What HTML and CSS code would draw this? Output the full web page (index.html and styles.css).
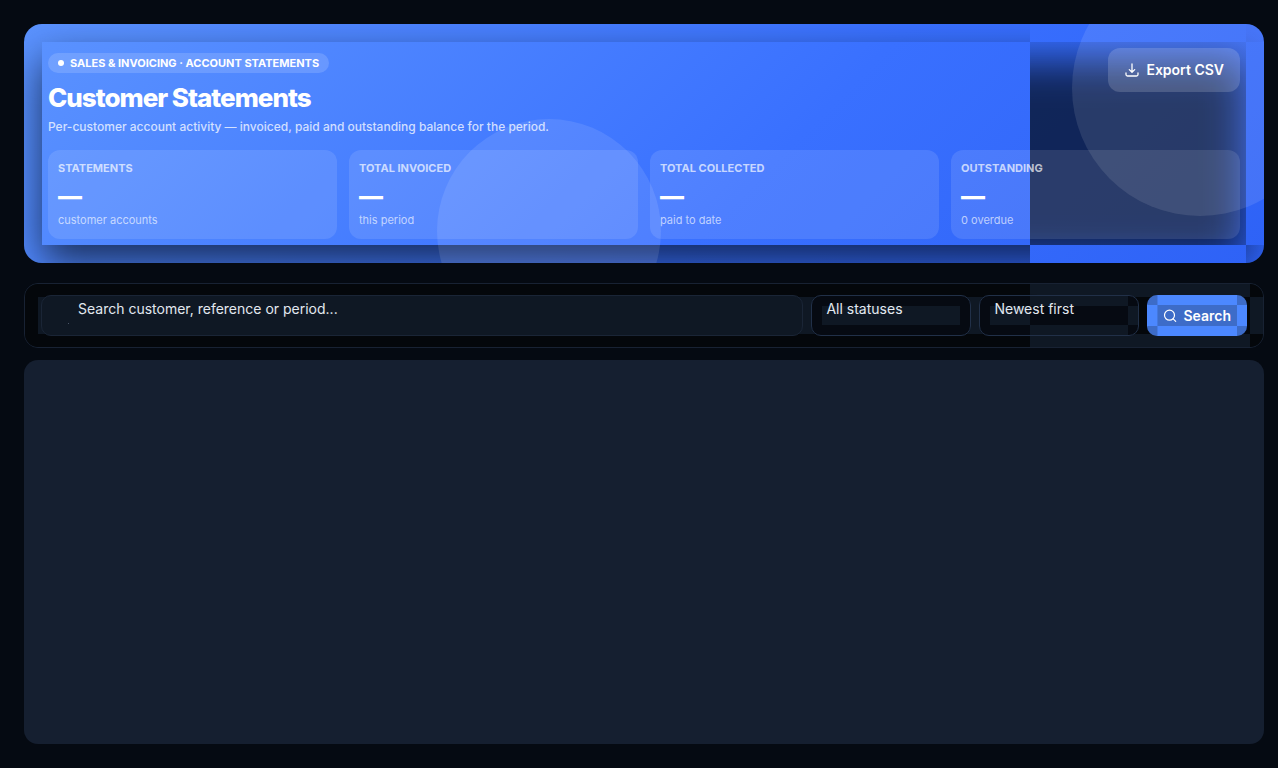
FILE: index.html
```html
<!DOCTYPE html>
<html lang="en">
<head>
<meta charset="utf-8">
<title>Customer Statements</title>
<link rel="stylesheet" href="styles.css">
</head>
<body>
<main class="page">
  <section class="hero">
    <div class="shade" aria-hidden="true"><span class="shade-core"></span></div>
    <span class="orb orb-right" aria-hidden="true"></span>
    <span class="orb orb-bottom" aria-hidden="true"></span>
    <header class="hero-head">
      <div class="hero-copy">
        <p class="eyebrow"><span class="dot"></span>SALES &amp; INVOICING · ACCOUNT STATEMENTS</p>
        <h1 class="title">Customer Statements</h1>
        <p class="subtitle">Per-customer account activity — invoiced, paid and outstanding balance for the period.</p>
      </div>
      <button class="export" type="button">
        <svg class="icon" viewBox="0 0 14 14" fill="none" stroke="currentColor" stroke-width="1.3" stroke-linecap="round" stroke-linejoin="round" aria-hidden="true"><path d="M7 1v8.200M4.300 6.600 7 9.300l2.700-2.700M1 10v1.500a1.500 1.500 0 0 0 1.500 1.500h9a1.500 1.500 0 0 0 1.500-1.500V10"/></svg>
        Export CSV
      </button>
    </header>
    <div class="stats">
      <article class="stat"><h2 class="stat-label">STATEMENTS</h2><p class="stat-value">—</p><p class="stat-note">customer accounts</p></article>
      <article class="stat"><h2 class="stat-label">TOTAL INVOICED</h2><p class="stat-value">—</p><p class="stat-note">this period</p></article>
      <article class="stat"><h2 class="stat-label">TOTAL COLLECTED</h2><p class="stat-value">—</p><p class="stat-note">paid to date</p></article>
      <article class="stat"><h2 class="stat-label">OUTSTANDING</h2><p class="stat-value">—</p><p class="stat-note">0 overdue</p></article>
    </div>
  </section>

  <form class="toolbar">
    <input class="field search" type="text" aria-label="Search statements" placeholder="Search customer, reference or period...">
    <div class="pick pick-status">
      <select class="field select" aria-label="Status"><option>All statuses</option></select>
    </div>
    <div class="pick pick-sort">
      <select class="field select" aria-label="Sort order"><option>Newest first</option></select>
    </div>
    <button class="submit" type="button">
      <svg class="icon" viewBox="0 0 14 14" fill="none" stroke="currentColor" stroke-width="1.200" stroke-linecap="round" aria-hidden="true"><circle cx="6.500" cy="6.200" r="5"/><path d="m10.200 9.900 2.500 2.500"/></svg>
      Search
    </button>
  </form>

  <section class="results" aria-label="Statements"></section>
</main>
</body>
</html>
```
FILE: styles.css
```css
* { box-sizing: border-box; }

body {
  margin: 0;
  background: #050a12;
  color: #fff;
  font-family: Inter, "Liberation Sans", sans-serif;
}

h1, h2, p { margin: 0; }

.page {
  display: flex;
  flex-direction: column;
  min-height: 100vh;
  padding: 24px 14px 24px 24px;
}

/* Hero */
.hero {
  position: relative;
  overflow: hidden;
  display: flex;
  flex-direction: column;
  gap: 14px;
  padding: 24px;
  border-radius: 18px;
  background: linear-gradient(135deg, #5b93ff 0%, #3970ff 60%, #2e62f6 100%);
}

.shade,
.toolbar::before,
.submit::before {
  --right: calc(100% - var(--edge));
  --bottom: calc(100% - var(--edge));
  position: absolute;
  inset: 0;
}

.shade,
.toolbar::before {
  clip-path: polygon(evenodd,
    0 0, 100% 0, 100% 100%, 0 100%, 0 0,
    var(--edge) var(--edge), var(--split) var(--edge), var(--split) var(--bottom), var(--edge) var(--bottom), var(--edge) var(--edge), 0 0,
    var(--split) 0, var(--right) 0, var(--right) var(--edge), var(--split) var(--edge), var(--split) 0, 0 0,
    var(--split) var(--bottom), var(--right) var(--bottom), var(--right) 100%, var(--split) 100%, var(--split) var(--bottom), 0 0,
    var(--right) var(--edge), 100% var(--edge), 100% var(--bottom), var(--right) var(--bottom), var(--right) var(--edge), 0 0);
}

.shade { --edge: 18px; --split: calc(100% - 234px); }

.shade-core {
  position: absolute;
  inset: 36px 18px 0;
  background: rgba(2, 8, 20, .7);
  filter: blur(20px);
}

.orb { position: absolute; border-radius: 50%; background: rgba(255, 255, 255, .1); }
.orb-right { top: -64px; right: -64px; width: 256px; height: 256px; }
.orb-bottom { bottom: -80px; left: 33.333%; width: 224px; height: 224px; }

.hero-head, .stats { position: relative; }
.hero-head { display: flex; justify-content: space-between; align-items: flex-start; }
.hero-copy { padding-top: 5px; }

.eyebrow {
  display: flex;
  align-items: center;
  gap: 6px;
  width: fit-content;
  height: 20px;
  padding: 0 10px;
  border-radius: 10px;
  background: rgba(255, 255, 255, .15);
  font-size: 11px;
  font-weight: 700;
}
.dot { width: 6px; height: 6px; border-radius: 50%; background: #fff; }

.title { margin-top: 8px; font-size: 26px; line-height: 34px; font-weight: 800; letter-spacing: -1px; }
.subtitle { margin-top: 3px; font-size: 12px; line-height: 18px; font-weight: 500; color: rgba(255, 255, 255, .75); }

.icon { width: 14px; height: 14px; flex: none; }

.export, .submit {
  display: flex;
  align-items: center;
  gap: 7px;
  border: 0;
  color: #fff;
  font: 600 14px/20px Inter, "Liberation Sans", sans-serif;
}
.export { height: 44px; padding: 0 16px 0 17px; border-radius: 12px; background: rgba(255, 255, 255, .16); }

.stats { display: grid; grid-template-columns: repeat(4, 1fr); gap: 12px; }
.stat { padding: 10px 10px 11px; border-radius: 12px; background: rgba(255, 255, 255, .11); }
.stat-label { font-size: 11px; line-height: 16px; font-weight: 700; color: rgba(255, 255, 255, .7); }
.stat-value { margin-top: 6px; font-size: 24px; line-height: 30px; font-weight: 800; }
.stat-note { font-size: 11px; line-height: 16px; color: rgba(255, 255, 255, .65); }

/* Filters */
.toolbar {
  position: relative;
  display: flex;
  gap: 8px;
  margin-top: 20px;
  padding: 11px 16px;
  border: 1px solid #182233;
  border-radius: 14px;
  background: #0f1824;
}
.toolbar::before {
  --edge: 13px;
  --split: calc(100% - 233px);
  content: "";
  border-radius: 13px;
  background: #04070b;
}
.toolbar > * { position: relative; }

.field {
  height: 41px;
  border: 1px solid #1a2536;
  border-radius: 10px;
  color: #e2e8f0;
  font: 14px/20px Inter, "Liberation Sans", sans-serif;
}
.search {
  flex: 1;
  min-width: 0;
  padding: 2px 14px 16px 36px;
  background: linear-gradient(#4a5568, #4a5568) 26px 27px / 1px 1px no-repeat #0f1824;
}
.search::placeholder { color: #e2e8f0; opacity: 1; }

.pick { width: 160px; border-radius: 10px; }
.select {
  display: block;
  width: 100%;
  padding: 2px 14px 16px;
  border-color: #213048;
  background: transparent;
  appearance: none;
}
.pick-status { background: linear-gradient(#0f1824, #0f1824) 11px 11px / calc(100% - 22px) 19px no-repeat #060a12; }
.pick-sort {
  background:
    linear-gradient(#0f1824, #0f1824) 11px 11px / 40px 19px no-repeat,
    linear-gradient(#060a12, #060a12) 0 0 / 51px 100% no-repeat,
    linear-gradient(#060a12, #060a12) 51px 11px / 98px 19px no-repeat,
    linear-gradient(#060a12, #060a12) 100% 0 / 11px 11px no-repeat,
    linear-gradient(#060a12, #060a12) 100% 100% / 11px 11px no-repeat,
    #0f1824;
}

.submit {
  isolation: isolate;
  overflow: hidden;
  gap: 6px;
  height: 41px;
  padding: 0 16px;
  border-radius: 10px;
  background: #4c88ff;
}
.submit::before {
  --edge: 10px;
  content: "";
  z-index: -1;
  background: rgba(15, 24, 36, .25);
  clip-path: polygon(evenodd,
    0 0, 10px 0, 10px 10px, 0 10px, 0 0,
    var(--right) 0, 100% 0, 100% 10px, var(--right) 10px, var(--right) 0, 0 0,
    0 var(--bottom), 10px var(--bottom), 10px 100%, 0 100%, 0 var(--bottom), 0 0,
    var(--right) var(--bottom), 100% var(--bottom), 100% 100%, var(--right) 100%, var(--right) var(--bottom), 0 0,
    10px 10px, var(--right) 10px, var(--right) var(--bottom), 10px var(--bottom), 10px 10px, 0 0);
}

/* Results */
.results { flex: 1; min-height: 200px; margin-top: 12px; border-radius: 14px; background: #151f30; }
```
